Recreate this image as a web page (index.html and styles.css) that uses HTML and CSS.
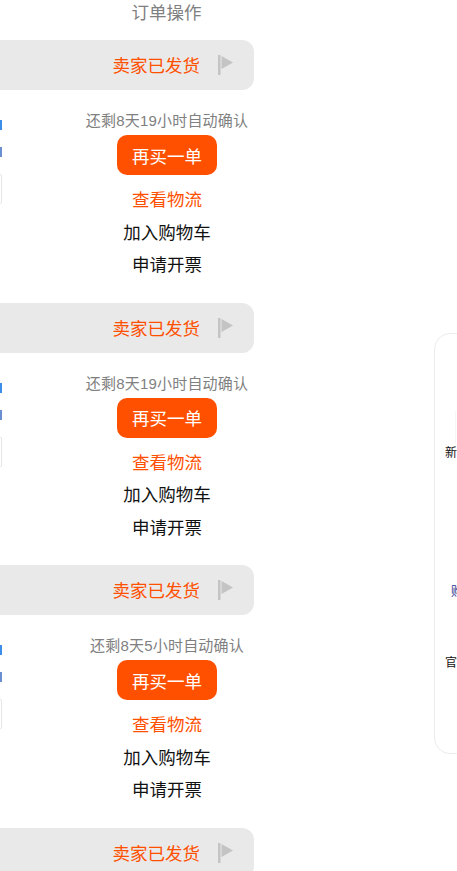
FILE: index.html
```html
<!DOCTYPE html>
<html lang="zh-CN">
<head>
    <meta charset="UTF-8">
    <meta name="viewport" content="width=device-width, initial-scale=1.0">
    <title>订单操作</title>
    <link rel="stylesheet" href="styles.css">
</head>
<body>
    <div class="page">
        <div class="orders">
            <div class="orders-title">订单操作</div>

            <div class="order">
                <div class="order-head">
                    <span class="order-status">卖家已发货</span>
                    <svg class="flag" viewBox="0 0 15 20"><rect x="0" y="0" width="2.5" height="20"/><path d="M3.5 1 L15 7.5 L3.5 14 Z"/></svg>
                </div>
                <div class="order-body">
                    <div class="order-left">
                        <span class="dot"></span>
                        <span class="dot dot-dim"></span>
                        <span class="box"></span>
                    </div>
                    <div class="order-actions">
                        <div class="time-left">还剩8天19小时自动确认</div>
                        <button class="buy-again">再买一单</button>
                        <a class="action action-orange">查看物流</a>
                        <a class="action">加入购物车</a>
                        <a class="action">申请开票</a>
                    </div>
                </div>
            </div>

            <div class="order">
                <div class="order-head">
                    <span class="order-status">卖家已发货</span>
                    <svg class="flag" viewBox="0 0 15 20"><rect x="0" y="0" width="2.5" height="20"/><path d="M3.5 1 L15 7.5 L3.5 14 Z"/></svg>
                </div>
                <div class="order-body">
                    <div class="order-left">
                        <span class="dot"></span>
                        <span class="dot dot-dim"></span>
                        <span class="box"></span>
                    </div>
                    <div class="order-actions">
                        <div class="time-left">还剩8天19小时自动确认</div>
                        <button class="buy-again">再买一单</button>
                        <a class="action action-orange">查看物流</a>
                        <a class="action">加入购物车</a>
                        <a class="action">申请开票</a>
                    </div>
                </div>
            </div>

            <div class="order">
                <div class="order-head">
                    <span class="order-status">卖家已发货</span>
                    <svg class="flag" viewBox="0 0 15 20"><rect x="0" y="0" width="2.5" height="20"/><path d="M3.5 1 L15 7.5 L3.5 14 Z"/></svg>
                </div>
                <div class="order-body">
                    <div class="order-left">
                        <span class="dot"></span>
                        <span class="dot dot-dim"></span>
                        <span class="box"></span>
                    </div>
                    <div class="order-actions">
                        <div class="time-left">还剩8天5小时自动确认</div>
                        <button class="buy-again">再买一单</button>
                        <a class="action action-orange">查看物流</a>
                        <a class="action">加入购物车</a>
                        <a class="action">申请开票</a>
                    </div>
                </div>
            </div>

            <div class="order">
                <div class="order-head">
                    <span class="order-status">卖家已发货</span>
                    <svg class="flag" viewBox="0 0 15 20"><rect x="0" y="0" width="2.5" height="20"/><path d="M3.5 1 L15 7.5 L3.5 14 Z"/></svg>
                </div>
            </div>
        </div>

        <div class="side-panel">
            <div class="side-thumb"></div>
            <div class="side-item side-new">新人专享</div>
            <div class="side-item side-buy">购物车</div>
            <div class="side-item side-official">官方客服</div>
        </div>
    </div>
</body>
</html>
```
FILE: styles.css
```css
html, body {
    margin: 0;
    padding: 0;
    height: 100%;
    overflow: hidden;
    background: #fff;
}
body {
    font-family: "Liberation Sans", "Noto Sans CJK SC", sans-serif;
    color: #111;
}
.page {
    display: flex;
    align-items: flex-start;
    height: 871px;
    overflow: hidden;
}
.orders {
    flex: none;
    width: 300px;
    margin-left: -46px;
}
.orders-title {
    height: 40px;
    padding-left: 125px;
    box-sizing: border-box;
    text-align: center;
    font-size: 17.5px;
    line-height: 26px;
    color: #808080;
}
.order {
    height: 262.5px;
}
.order-head {
    display: flex;
    align-items: center;
    justify-content: flex-end;
    height: 50px;
    padding-right: 21px;
    background: #e9e9e9;
    border-radius: 0 12px 12px 0;
}
.order-status {
    padding-top: 2px;
    font-size: 17.5px;
    line-height: 48px;
    color: #ff5000;
}
.flag {
    width: 15px;
    height: 20px;
    margin-left: 18px;
    fill: #c4c4c4;
}
.order-body {
    display: flex;
    padding-top: 20px;
}
.order-left {
    flex: none;
    width: 48px;
    margin-right: 77px;
    display: flex;
    flex-direction: column;
    align-items: flex-end;
    padding-top: 10px;
}
.dot {
    width: 2px;
    height: 10px;
    margin-bottom: 17px;
    background: #3d8ee8;
}
.dot-dim {
    background: #6a8fd0;
}
.box {
    width: 1px;
    height: 28px;
    border: 1px solid #e6e6e6;
    border-left: none;
    border-radius: 0 4px 4px 0;
}
.order-actions {
    flex: none;
    width: 176px;
    display: flex;
    flex-direction: column;
    align-items: center;
    font-size: 17.5px;
}
.time-left {
    font-size: 15px;
    letter-spacing: 0.2px;
    line-height: 22px;
    color: #808080;
    white-space: nowrap;
}
.buy-again {
    width: 100px;
    height: 40px;
    margin-top: 3px;
    padding: 0;
    border: none;
    border-radius: 10px;
    background: #ff5000;
    color: #fff;
    font-family: inherit;
    font-size: 17.5px;
}
.action {
    display: block;
    line-height: 32.5px;
    color: #111;
}
.action-orange {
    margin-top: 9px;
    color: #ff5000;
}
.side-panel {
    flex: none;
    width: 120px;
    height: 421px;
    margin-top: 333px;
    margin-left: 180px;
    padding-left: 10px;
    box-sizing: border-box;
    border: 1px solid #ececec;
    border-radius: 16px;
    font-size: 12px;
    color: #111;
}
.side-thumb {
    width: 40px;
    height: 32px;
    margin-top: 77px;
    margin-left: 10px;
    border-left: 1px solid #f6f6f6;
}
.side-item {
    white-space: nowrap;
    line-height: 16px;
}
.side-new {
    margin-top: 2px;
}
.side-buy {
    margin-top: 123px;
    margin-left: 6px;
    color: #1a2a8c;
}
.side-official {
    margin-top: 55px;
}
```
